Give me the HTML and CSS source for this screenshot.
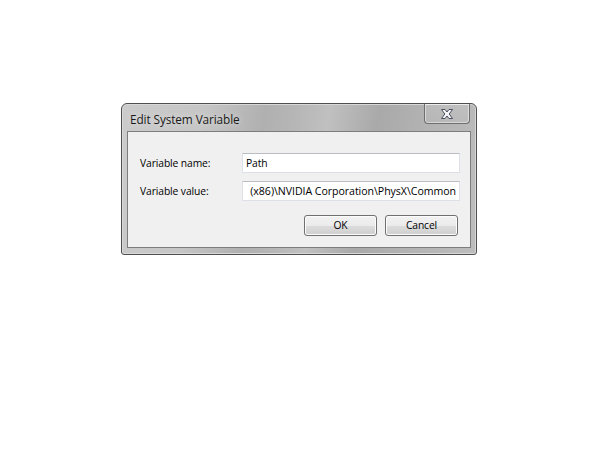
FILE: index.html
```html
<!DOCTYPE html>
<html>
<head>
<meta charset="utf-8">
<link rel="stylesheet" href="styles.css">
</head>
<body>
<div class="window">
  <div class="titlebar">
    <span class="title">Edit System Variable</span>
    <div class="close">
      <svg width="16" height="12" viewBox="0 0 16 12">
        <path d="M2.5 1.5 H6 L8 4 L10 1.5 H13.5 L10.2 6 L13.5 10.5 H10 L8 8 L6 10.5 H2.5 L5.8 6 Z" fill="#f4f4f6" stroke="#4a5060" stroke-width="1" stroke-linejoin="round"/>
      </svg>
    </div>
  </div>
  <div class="client">
    <div class="row">
      <span class="label">Variable name:</span>
      <div class="field">Path</div>
    </div>
    <div class="row">
      <span class="label">Variable value:</span>
      <div class="field value"><span>(x86)\NVIDIA Corporation\PhysX\Common</span></div>
    </div>
    <div class="buttons">
      <div class="btn">OK</div>
      <div class="btn">Cancel</div>
    </div>
  </div>
</div>
</body>
</html>
```

FILE: styles.css
```css
html, body {
  margin: 0;
  padding: 0;
  background: #ffffff;
}
body {
  padding: 103px 0 0 121px;
  font-family: "Open Sans", "DejaVu Sans", sans-serif;
  font-size: 10.3px;
  letter-spacing: -0.1px;
  color: #000;
}
.window {
  box-sizing: border-box;
  width: 356px;
  height: 152px;
  border: 1px solid #4f4f4f;
  border-radius: 6px 6px 3px 3px;
  padding: 0 5px 6px 5px;
  background: linear-gradient(100deg, #cbcbcb 0%, #c6c6c6 22%, #b0b0b0 38%, #b6b6b6 46%, #c0c0c0 55%, #a9a9a9 68%, #b2b2b2 80%, #bdbdbd 100%);
  box-shadow: inset 0 0 0 1px #d8d8d8;
  display: flex;
  flex-direction: column;
}
.titlebar {
  height: 27px;
  display: flex;
  align-items: flex-start;
  justify-content: space-between;
  flex: none;
}
.title {
  margin: 7px 0 0 3px;
  font-size: 11.8px;
  letter-spacing: -0.1px;
  color: #1a1a1a;
  text-shadow: 0 0 6px rgba(255, 255, 255, 0.6);
}
.close {
  box-sizing: border-box;
  width: 46px;
  height: 20px;
  margin-right: 1px;
  border: 1px solid #6e6e6e;
  border-top: none;
  border-radius: 0 0 4px 4px;
  background: linear-gradient(rgba(255,255,255,0.12), rgba(255,255,255,0.04));
  box-shadow: inset 0 0 0 1px rgba(255,255,255,0.45);
  display: flex;
  align-items: center;
  justify-content: center;
}
.client {
  flex: 1;
  box-sizing: border-box;
  border: 1px solid #7d7d7d;
  background: #f0f0f0;
  padding: 21px 10px 0 12px;
  display: flex;
  flex-direction: column;
  gap: 8px;
}
.row {
  display: flex;
  align-items: center;
  height: 20px;
}
.label {
  width: 102px;
  flex: none;
}
.field {
  box-sizing: border-box;
  flex: 1;
  height: 20px;
  background: #fff;
  border: 1px solid #dde0e6;
  border-top-color: #b9bcc3;
  padding: 0 3px;
  line-height: 18px;
  white-space: nowrap;
  overflow: hidden;
  display: flex;
}
.field.value {
  justify-content: flex-end;
  padding-right: 3px;
  font-size: 10.6px;
  letter-spacing: -0.05px;
}
.field.value span {
  flex: none;
}
.buttons {
  display: flex;
  justify-content: flex-end;
  gap: 8px;
  margin-top: 6px;
  padding-right: 2px;
}
.btn {
  box-sizing: border-box;
  width: 73px;
  height: 21px;
  border: 1px solid #707070;
  border-radius: 3px;
  background: linear-gradient(#f2f2f2 0%, #ebebeb 50%, #dddddd 51%, #cfcfcf 100%);
  box-shadow: inset 0 0 0 1px #fcfcfc;
  text-align: center;
  line-height: 19px;
}
```
